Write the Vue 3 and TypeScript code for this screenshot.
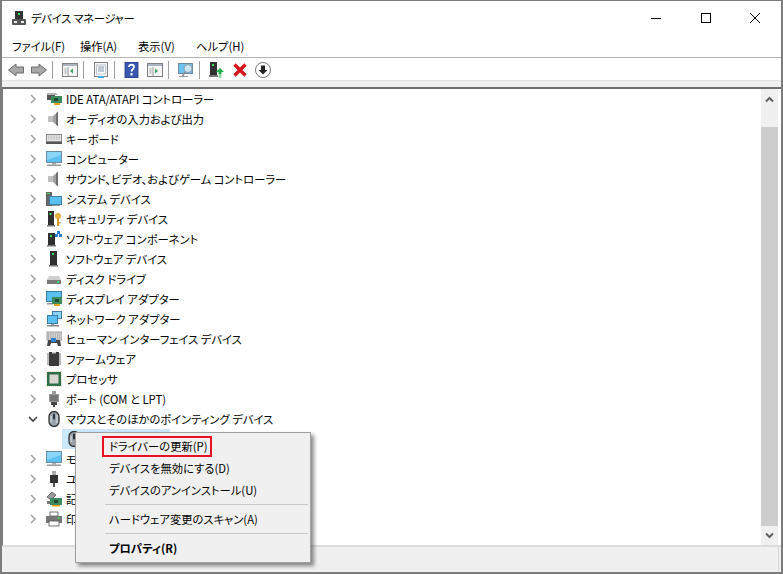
<script setup lang="ts">
interface Row { icon: string; label: string; open?: boolean; child?: boolean }
const rows: Row[] = [
  { icon: 'ide', label: 'IDE ATA/ATAPI コントローラー' },
  { icon: 'speaker', label: 'オーディオの入力および出力' },
  { icon: 'keyboard', label: 'キーボード' },
  { icon: 'monitor', label: 'コンピューター' },
  { icon: 'speaker', label: 'サウンド、ビデオ、およびゲーム コントローラー' },
  { icon: 'system', label: 'システム デバイス' },
  { icon: 'security', label: 'セキュリティ デバイス' },
  { icon: 'softcomp', label: 'ソフトウェア コンポーネント' },
  { icon: 'tower', label: 'ソフトウェア デバイス' },
  { icon: 'disk', label: 'ディスク ドライブ' },
  { icon: 'display', label: 'ディスプレイ アダプター' },
  { icon: 'network', label: 'ネットワーク アダプター' },
  { icon: 'hid', label: 'ヒューマン インターフェイス デバイス' },
  { icon: 'firmware', label: 'ファームウェア' },
  { icon: 'cpu', label: 'プロセッサ' },
  { icon: 'port', label: 'ポート (COM と LPT)' },
  { icon: 'mouse', label: 'マウスとそのほかのポインティング デバイス', open: true },
  { icon: 'mouse', label: 'HID 準拠マウス', child: true },
  { icon: 'monitor', label: 'モニター' },
  { icon: 'usb', label: 'ユニバーサル シリアル バス コントローラー' },
  { icon: 'storage', label: '記憶域コントローラー' },
  { icon: 'printer', label: '印刷キュー' },
]
const menus = ['ファイル(F)', '操作(A)', '表示(V)', 'ヘルプ(H)']
const tools = ['back', 'forward', '|', 'pane', '|', 'sheet', '|', 'help', 'pane2', '|', 'scan', '|', 'update', 'remove', 'download']
</script>

<template>
  <div class="window">
    <svg class="defs" aria-hidden="true">
      <defs>
        <symbol id="i-title" viewBox="0 0 16 16">
          <rect x="4" y="1" width="8" height="9" fill="#333"/><rect x="7" y="3" width="2" height="2" fill="#3fdc5a"/>
          <rect x="1" y="9" width="14" height="6" rx="1" fill="#555"/><rect x="3" y="11" width="3" height="2" fill="#eee"/><rect x="10" y="11" width="3" height="2" fill="#eee"/>
        </symbol>
        <symbol id="i-ide" viewBox="0 0 16 16">
          <path d="M1 2h9l2 2H1z" fill="#b5b5b5"/><rect x="1" y="4" width="8" height="5" fill="#555"/>
          <rect x="5" y="5" width="11" height="7" fill="#3d8a5e"/><rect x="8" y="7" width="4" height="3" fill="#1f4a33"/>
          <rect x="8" y="12" width="6" height="2" fill="#f0a020"/>
        </symbol>
        <symbol id="i-speaker" viewBox="0 0 16 16">
          <rect x="2" y="5" width="5" height="6" fill="#c0c0c0"/><path d="M7 5l5-4.500v15L7 11z" fill="#a0a0a0"/><path d="M10 2.500l2-2v15l-2-2z" fill="#707070"/>
        </symbol>
        <symbol id="i-keyboard" viewBox="0 0 16 16">
          <rect x="0" y="3" width="16" height="10" fill="#8a8a8a"/><rect x="1" y="4" width="14" height="6" fill="#e4e4e4"/>
          <path d="M2 5h12M2 6.500h12M2 8h12" stroke="#a0a0a0" stroke-width=".6" stroke-dasharray="1 .6"/>
          <rect x="0" y="11" width="16" height="2" fill="#555"/>
        </symbol>
        <symbol id="i-monitor" viewBox="0 0 16 16">
          <rect x=".5" y=".5" width="15" height="11" fill="#5cc0f0" stroke="#6a8ba0"/><path d="M1 1h14v3L1 9z" fill="#8ad6f8"/>
          <rect x="6" y="12" width="4" height="1.500" fill="#aaa"/><rect x="1" y="13.500" width="14" height="1.500" fill="#9a9a9a"/>
        </symbol>
        <symbol id="i-system" viewBox="0 0 16 16">
          <rect x="0" y="1" width="6" height="14" fill="#666"/><rect x="1" y="2" width="3" height="1" fill="#3fdc5a"/>
          <rect x="3.500" y="5.500" width="12" height="8" fill="#5cc0f0" stroke="#3b7ea5"/><rect x="6" y="14" width="8" height="1" fill="#999"/>
        </symbol>
        <symbol id="i-tower" viewBox="0 0 16 16">
          <rect x="4" y="0" width="7" height="14" fill="#303030"/><rect x="6" y="2" width="2" height="2" fill="#3fdc5a"/><rect x="3" y="14" width="9" height="1.500" fill="#777"/>
        </symbol>
        <symbol id="i-security" viewBox="0 0 16 16">
          <rect x="2" y="0" width="6" height="14" fill="#303030"/><rect x="3.500" y="2" width="2" height="2" fill="#3fdc5a"/><rect x="1" y="14" width="8" height="1.500" fill="#777"/>
          <circle cx="12" cy="5" r="3" fill="#e0b040"/><rect x="11" y="7" width="2" height="8" fill="#d09a28"/><rect x="13" y="11" width="1.500" height="1.500" fill="#d09a28"/>
        </symbol>
        <symbol id="i-softcomp" viewBox="0 0 16 16">
          <rect x="2" y="2" width="7" height="12" fill="#303030"/><rect x="4" y="4" width="2" height="2" fill="#3fdc5a"/><rect x="1" y="14" width="9" height="1.500" fill="#777"/>
          <rect x="9" y="3" width="3" height="3" fill="#2a7fd0"/><rect x="13" y="3" width="3" height="3" fill="#2a7fd0"/><rect x="11" y="0" width="3" height="3" fill="#2a7fd0"/>
        </symbol>
        <symbol id="i-disk" viewBox="0 0 16 16">
          <path d="M3 5h10l2 4H1z" fill="#cfcfcf"/><rect x="1" y="9" width="14" height="4" fill="#777"/><rect x="11" y="10" width="2" height="2" fill="#3fdc5a"/>
        </symbol>
        <symbol id="i-display" viewBox="0 0 16 16">
          <rect x=".5" y=".5" width="15" height="10" fill="#5cc0f0" stroke="#3b7ea5"/><rect x="1" y="12" width="6" height="1.500" fill="#999"/>
          <rect x="6" y="6" width="10" height="7" fill="#3d8a5e"/><rect x="9" y="8" width="4" height="3" fill="#1f4a33"/><rect x="8" y="13" width="6" height="2" fill="#f0a020"/>
        </symbol>
        <symbol id="i-network" viewBox="0 0 16 16">
          <rect x="6.500" y=".5" width="9" height="7" fill="#8ad6f8" stroke="#3b7ea5"/><rect x="1.500" y="4.500" width="10" height="8" fill="#5cc0f0" stroke="#3b7ea5"/>
          <rect x="5" y="13" width="3" height="1" fill="#999"/><rect x="1" y="14" width="12" height="1.500" fill="#888"/>
        </symbol>
        <symbol id="i-hid" viewBox="0 0 16 16">
          <rect x="1" y="1" width="15" height="8" fill="#dcdcdc" stroke="#888" stroke-width=".8"/>
          <path d="M2 3h13M2 5h13M2 7h13" stroke="#777" stroke-width=".9" stroke-dasharray="1 .8"/>
          <path d="M1 15l1-6h12l1 6h-3l-1-3H5l-1 3z" fill="#444"/><rect x="5" y="7" width="5" height="4" fill="#2a7fd0"/>
        </symbol>
        <symbol id="i-firmware" viewBox="0 0 16 16">
          <rect x="3" y="1" width="10" height="14" fill="#3a3a3a"/>
          <path d="M1 3h2M1 5h2M1 7h2M1 9h2M1 11h2M1 13h2M13 3h2M13 5h2M13 7h2M13 9h2M13 11h2M13 13h2" stroke="#777"/>
          <rect x="6" y="1" width="4" height="1.500" fill="#ccc"/>
        </symbol>
        <symbol id="i-cpu" viewBox="0 0 16 16">
          <rect x="1" y="1" width="14" height="14" fill="#2e6e4a"/><rect x="3.500" y="3.500" width="9" height="9" fill="#d8d8d0"/>
          <rect x="0" y="0" width="16" height="16" fill="none" stroke="#c8a860" stroke-width=".8" stroke-dasharray="1 1"/>
        </symbol>
        <symbol id="i-port" viewBox="0 0 16 16">
          <path d="M6 0h4v3H6z" fill="#999"/><rect x="3" y="3" width="10" height="8" fill="#999"/>
          <path d="M4 5h8M4 7h8M4 9h8" stroke="#555"/><path d="M5 11h6v3H9v2H7v-2H5z" fill="#444"/>
        </symbol>
        <symbol id="i-mouse" viewBox="0 0 16 16">
          <rect x="3" y=".5" width="10" height="15" rx="5" fill="#9aa4ac" stroke="#333" stroke-width="1.300"/><rect x="7" y="2.500" width="2" height="6" rx="1" fill="#2c3238"/>
          <path d="M5 5v6M11 4v8" stroke="#dfe4e8"/>
        </symbol>
        <symbol id="i-usb" viewBox="0 0 16 16">
          <rect x="6" y="0" width="4" height="4" fill="#aaa"/><rect x="4" y="4" width="8" height="8" fill="#333"/><rect x="7" y="12" width="2" height="4" fill="#555"/>
        </symbol>
        <symbol id="i-storage" viewBox="0 0 16 16">
          <path d="M1 6l5-5 4 3-5 5z" fill="#9a9a9a" stroke="#444" stroke-width=".7"/>
          <rect x="4" y="7" width="12" height="7" fill="#3d8a5e"/><rect x="8" y="9" width="4" height="3" fill="#1f4a33"/><rect x="1" y="10" width="3" height="3" fill="#777"/>
          <rect x="6" y="14" width="8" height="1.500" fill="#f0a020"/>
        </symbol>
        <symbol id="i-printer" viewBox="0 0 16 16">
          <rect x="4" y="1" width="8" height="4" fill="#fff" stroke="#555" stroke-width=".8"/><rect x="0" y="5" width="16" height="7" fill="#777"/>
          <rect x="3" y="10" width="10" height="5" fill="#fff" stroke="#555" stroke-width=".8"/><rect x="12" y="6.500" width="2" height="1.500" fill="#3fdc5a"/>
        </symbol>
        <symbol id="t-back" viewBox="0 0 16 16"><path d="M.5 8L8 2v3h7.500v6H8v3z" fill="#a8a8a8" stroke="#6d6d6d"/></symbol>
        <symbol id="t-forward" viewBox="0 0 16 16"><path d="M15.500 8L8 2v3H.5v6H8v3z" fill="#a8a8a8" stroke="#6d6d6d"/></symbol>
        <symbol id="t-pane" viewBox="0 0 16 16">
          <rect x=".5" y="1.500" width="15" height="13" fill="#f4f4f4" stroke="#808080"/><rect x="1" y="2" width="14" height="2" fill="#a9b4c0"/>
          <path d="M6 5v9" stroke="#9a9a9a"/><path d="M11 6.500v5L8 9z" fill="#35a35a"/><path d="M2.500 7h2M2.500 9h2M2.500 11h2" stroke="#9a9a9a"/>
        </symbol>
        <symbol id="t-pane2" viewBox="0 0 16 16">
          <rect x=".5" y="1.500" width="15" height="13" fill="#f4f4f4" stroke="#808080"/><rect x="1" y="2" width="14" height="2" fill="#a9b4c0"/>
          <path d="M6 5v9" stroke="#9a9a9a"/><path d="M8 6.500v5L11 9z" fill="#35a35a"/><path d="M2.500 7h2M2.500 9h2M2.500 11h2" stroke="#9a9a9a"/>
        </symbol>
        <symbol id="t-sheet" viewBox="0 0 16 16">
          <rect x="1.500" y=".5" width="13" height="14" fill="#f8f8f8" stroke="#808080"/><rect x="3.500" y="3" width="9" height="9" fill="#fff" stroke="#b8c4d0"/>
          <path d="M5 5h6M5 7h6M5 9h6" stroke="#7f98b0"/><rect x="5" y="14" width="6" height="2" fill="#3aa8e8"/>
        </symbol>
        <symbol id="t-help" viewBox="0 0 16 16">
          <rect x="1" y="0" width="13" height="16" fill="#3858b0" stroke="#1f3580" stroke-width=".8"/>
          <path d="M5 5c0-3 5-3 5 0 0 2-2.500 2-2.500 4.500" fill="none" stroke="#fff" stroke-width="1.800"/><rect x="6.500" y="11" width="2" height="2.500" fill="#fff"/>
        </symbol>
        <symbol id="t-scan" viewBox="0 0 16 16">
          <rect x=".5" y="1.500" width="14" height="10" fill="#6cc4f0" stroke="#6a8ba0"/><circle cx="10" cy="6.500" r="4" fill="#cfe6f4" stroke="#8a9aa6"/>
          <path d="M7 10l-3 5" stroke="#8a8a8a" stroke-width="1.500"/><path d="M1 14.500h9" stroke="#9a9a9a"/>
        </symbol>
        <symbol id="t-update" viewBox="0 0 16 16">
          <rect x="1" y="0" width="7" height="13" fill="#303030"/><rect x="3" y="2" width="2" height="2" fill="#3fdc5a"/><rect x="0" y="13" width="9" height="2" fill="#777"/>
          <path d="M11 6l4 4h-2.500v2h-3v-2H7z" fill="#23b04a"/><path d="M9.500 13h3M9.500 15h3" stroke="#23b04a"/>
        </symbol>
        <symbol id="t-remove" viewBox="0 0 16 16"><path d="M2.500 2.500l11 11M13.500 2.500l-11 11" stroke="#d8141c" stroke-width="3.400"/></symbol>
        <symbol id="t-download" viewBox="0 0 16 16">
          <circle cx="8" cy="8" r="7.500" fill="#fff" stroke="#7a7a7a"/><path d="M6 3.500h4V8h2.500L8 12.500 3.500 8H6z" fill="#222"/>
        </symbol>
      </defs>
    </svg>

    <header class="titlebar">
      <svg class="title-icon"><use href="#i-title" /></svg>
      <span class="title-text">デバイス マネージャー</span>
      <div class="controls">
        <button class="ctl"><svg width="12" height="12" viewBox="0 0 12 12"><path d="M1 6.500h10" stroke="#000" /></svg></button>
        <button class="ctl"><svg width="12" height="12" viewBox="0 0 12 12"><rect x="1.500" y="1.500" width="9" height="9" fill="none" stroke="#000" /></svg></button>
        <button class="ctl"><svg width="12" height="12" viewBox="0 0 12 12"><path d="M1 1l10 10M11 1L1 11" stroke="#000" /></svg></button>
      </div>
    </header>

    <nav class="menubar">
      <span v-for="m in menus" :key="m">{{ m }}</span>
    </nav>

    <div class="toolbar">
      <template v-for="(t, i) in tools" :key="i">
        <span v-if="t === '|'" class="tool-sep"></span>
        <span v-else class="tool"><svg class="ti"><use :href="'#t-' + t" /></svg></span>
      </template>
    </div>
    <div class="strip"></div>

    <main class="content">
      <section class="tree">
        <div v-for="r in rows" :key="r.label" class="row" :class="{ child: r.child }">
          <svg v-if="!r.child" class="chev" :class="{ open: r.open }" viewBox="0 0 10 10"><path d="M3 1l4 4-4 4" fill="none" stroke-width="1.600" /></svg>
          <svg class="ico"><use :href="'#i-' + r.icon" /></svg>
          <span>{{ r.label }}</span>
        </div>
      </section>
      <aside class="scrollbar">
        <div class="sb-btn up"><svg width="9" height="7" viewBox="0 0 9 7"><path d="M1 5.500l3.500-3.500L8 5.500" fill="none" stroke="#606060" stroke-width="2" /></svg></div>
        <div class="sb-gap"></div>
        <div class="sb-thumb"></div>
        <div class="sb-btn down"><svg width="9" height="7" viewBox="0 0 9 7"><path d="M1 1.500L4.500 5 8 1.500" fill="none" stroke="#606060" stroke-width="2" /></svg></div>
      </aside>
    </main>
    <footer class="status"><span class="grip"></span></footer>

    <div class="ctx">
      <div class="mi">ドライバーの更新(P)</div>
      <div class="mi">デバイスを無効にする(D)</div>
      <div class="mi">デバイスのアンインストール(U)</div>
      <div class="msep"></div>
      <div class="mi">ハードウェア変更のスキャン(A)</div>
      <div class="msep"></div>
      <div class="mi bold">プロパティ(R)</div>
      <div class="redbox"></div>
    </div>
  </div>
</template>

<style scoped>
.window {
  position: relative;
  width: 783px;
  height: 574px;
  box-sizing: border-box;
  border: 2px solid #7c7c7c;
  border-top-width: 1px;
  background: #fff;
  display: flex;
  flex-direction: column;
  overflow: hidden;
  font-family: "Noto Sans CJK JP", "Noto Sans", sans-serif;
  font-size: 11.3px;
  font-feature-settings: "palt";
  color: #000;
}
.defs { position: absolute; width: 0; height: 0; }
.titlebar { height: 34px; display: flex; align-items: center; padding-left: 9px; }
.title-icon { width: 16px; height: 16px; }
.title-text { margin-left: 4px; flex: 1; letter-spacing: -0.25px; }
.controls { display: flex; margin-right: 1px; }
.ctl {
  width: 49.500px; height: 34px; border: 0; padding: 0; background: none;
  display: flex; align-items: center; justify-content: center;
}
.menubar {
  height: 22px; display: grid; grid-template-columns: 68px 58px 58px auto; justify-content: start; align-items: center; padding-left: 10px;
  border-bottom: 1px solid #b4b4b4;
}
.toolbar { height: 22px; box-sizing: border-box; padding-top: 2px; display: flex; align-items: center; padding-left: 2px; }
.tool { width: 23px; height: 20px; display: flex; align-items: center; justify-content: center; }
.ti { width: 16px; height: 16px; }
.tool-sep { width: 8px; height: 18px; }
.tool-sep::before { content: ""; display: block; width: 1px; height: 18px; background: #a0a0a0; margin-left: 2px; }
.strip { height: 6px; background: #f0f0f0; border-top: 1px solid #e2e2e2; }
.content {
  flex: 1; min-height: 0; display: flex; border-top: 2px solid #6e6e6e; border-left: 1px solid #7c7c7c;
  border-bottom: 1px solid #dcdcdc;
}
.tree { flex: 1; overflow: hidden; }
.row { height: 20px; display: flex; align-items: center; padding-left: 25px; white-space: nowrap; }
.row.child { margin-left: 59px; padding-left: 4px; width: 108px; box-sizing: border-box; background: #cce8ff; }
.chev { width: 10px; height: 10px; margin-right: 8px; stroke: #a6a6a6; }
.chev.open { transform: rotate(90deg); stroke: #404040; }
.ico { width: 16px; height: 16px; margin-right: 4px; flex: none; }
.scrollbar { width: 17px; margin-right: 3px; background: #f0f0f0; display: flex; flex-direction: column; }
.sb-btn { display: flex; align-items: center; justify-content: center; }
.sb-btn.up { height: 21px; }
.sb-gap { height: 17px; }
.sb-thumb { flex: 1; background: #cdcdcd; }
.sb-btn.down { height: 19px; }
.status { height: 25px; background: #f0f0f0; border-top: 1px solid #dcdcdc; display: flex; justify-content: flex-end; }
.grip { width: 1px; height: 100%; background: #d8d8d8; margin-right: 2px; }
.ctx {
  position: absolute; left: 73px; top: 431px; width: 234px; height: 127px;
  background: #f0f0f0; border: 1px solid #a0a0a0; box-shadow: 3px 3px 4px rgba(0, 0, 0, 0.45);
  padding-top: 2px;
}
.mi { height: 22px; line-height: 22px; padding-left: 33px; white-space: nowrap; }
.mi.bold { font-weight: 700; }
.msep { height: 1px; background: #c8c8c8; margin: 3px 2px 3px 29px; }
.redbox { position: absolute; left: 26px; top: 3px; width: 106px; height: 17px; border: 2px solid #e81123; }
</style>
